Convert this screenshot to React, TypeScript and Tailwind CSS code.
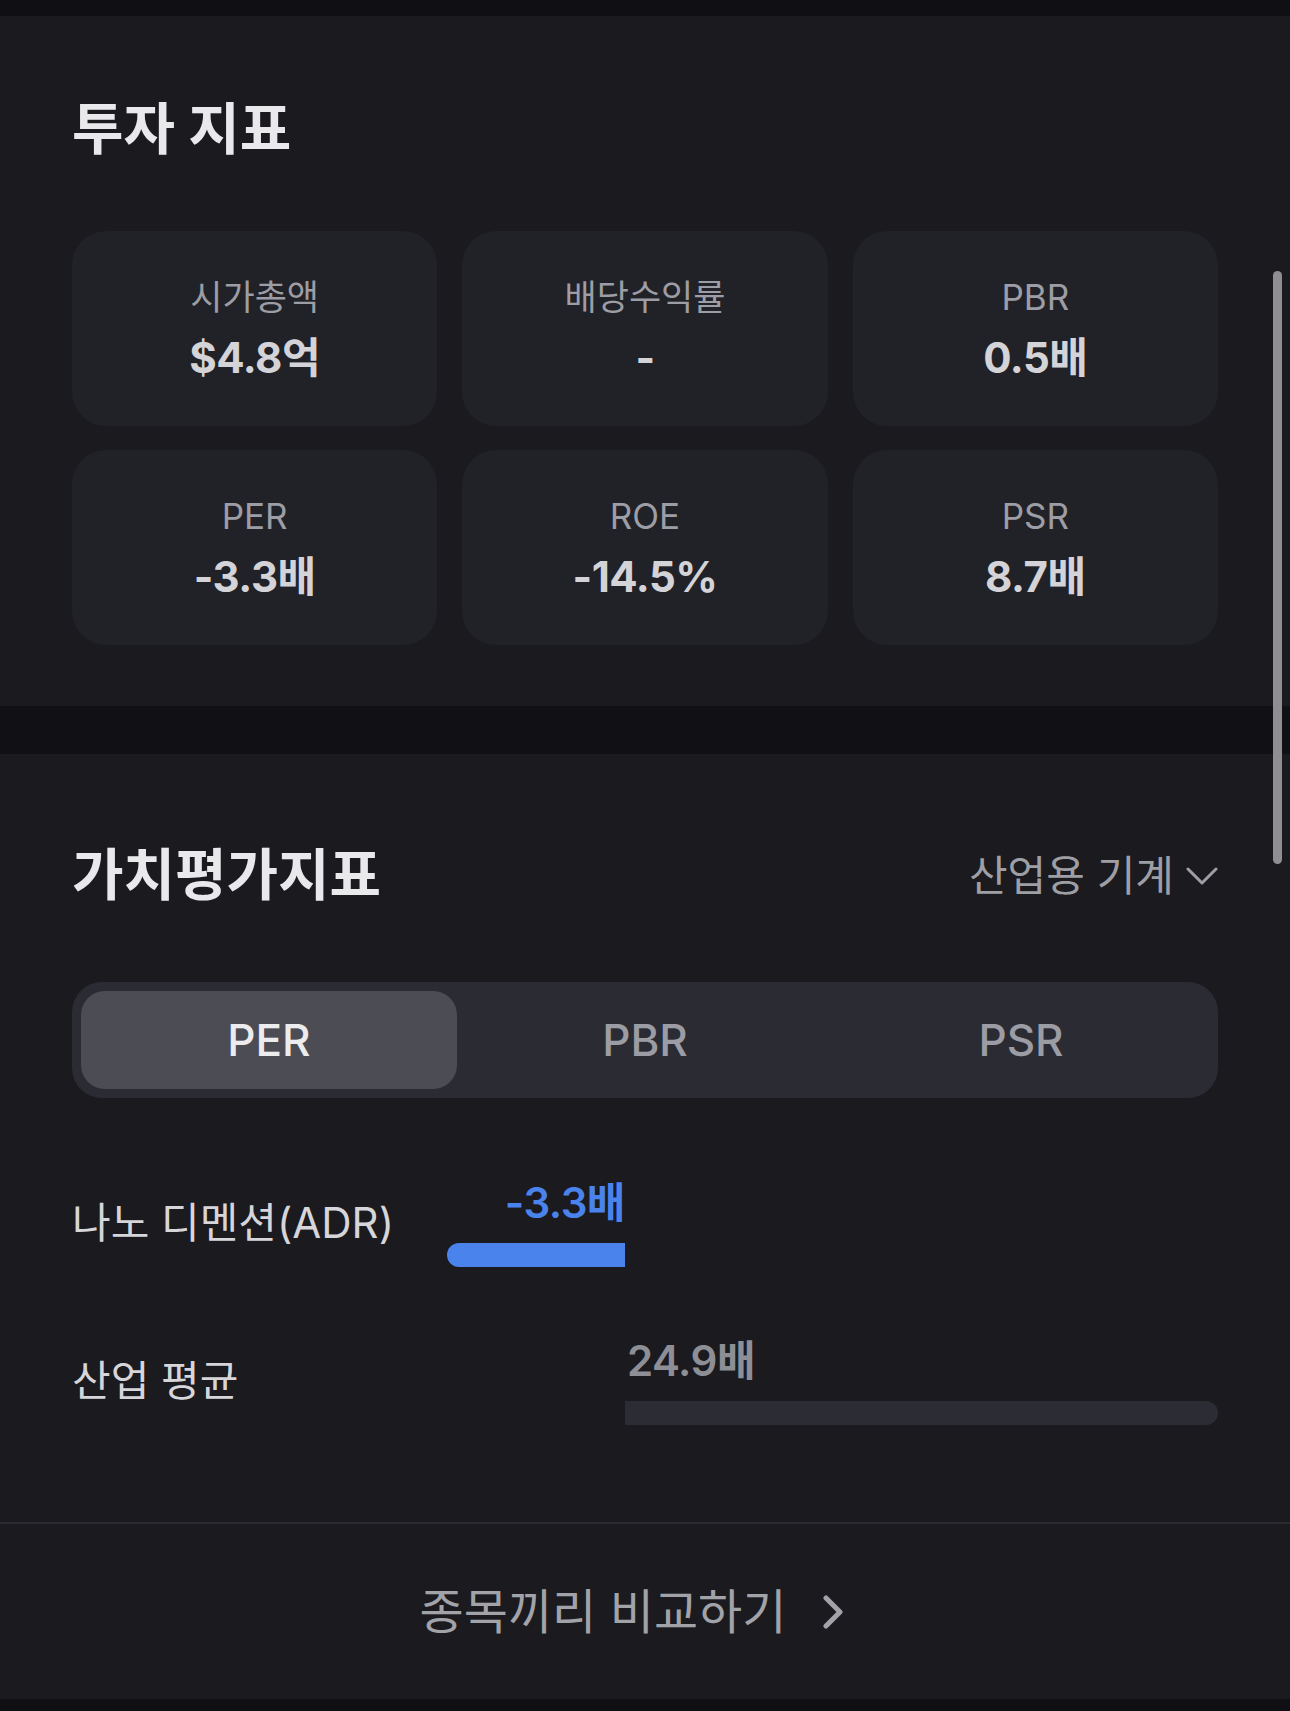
import { FC } from "react";

const FONT = "font-['Inter','Noto_Sans_CJK_KR',sans-serif]";

interface Metric {
  label: string;
  value: string;
}

const metrics: Metric[] = [
  { label: "시가총액", value: "$4.8억" },
  { label: "배당수익률", value: "-" },
  { label: "PBR", value: "0.5배" },
  { label: "PER", value: "-3.3배" },
  { label: "ROE", value: "-14.5%" },
  { label: "PSR", value: "8.7배" },
];

const MetricCard: FC<Metric> = ({ label, value }) => (
  <div className="flex h-[195px] flex-col items-center justify-center rounded-[34px] bg-[#212227]">
    <span className="text-[35px] leading-[44px] text-[#9d9da5]">{label}</span>
    <span className="mt-[14px] text-[42px] font-bold leading-[50px] tracking-[-0.5px] text-[#d3d3d8]">
      {value}
    </span>
  </div>
);

const tabs = ["PER", "PBR", "PSR"];

export default function App() {
  return (
    <div className={`relative flex min-h-[1711px] w-full flex-col bg-[#1a1a1f] ${FONT}`}>
      <div className="h-[16px] bg-[#101014]" />

      {/* 투자 지표 */}
      <section className="px-[72px] pb-[61px] pt-[81px]">
        <h2 className="text-[56px] font-bold leading-[65px] text-[#e9e9ec]">투자 지표</h2>
        <div className="mt-[69px] grid grid-cols-3 gap-x-[25px] gap-y-[24px]">
          {metrics.map((m) => (
            <MetricCard key={m.label} {...m} />
          ))}
        </div>
      </section>

      <div className="h-[48px] bg-[#111115]" />

      {/* 가치평가지표 */}
      <section className="px-[72px] pb-[97px] pt-[89px]">
        <div className="flex items-center justify-between">
          <h2 className="text-[56px] font-bold leading-[65px] text-[#e9e9ec]">가치평가지표</h2>
          <button className="flex items-center gap-[12px] text-[42px] leading-[50px] text-[#9e9ea5]">
            산업용 기계
            <svg width="32" height="18" viewBox="0 0 32 18" fill="none">
              <path
                d="M2 2L16 16L30 2"
                stroke="#9e9ea5"
                strokeWidth="3"
                strokeLinecap="round"
                strokeLinejoin="round"
              />
            </svg>
          </button>
        </div>

        <div className="mt-[74px] flex h-[116px] rounded-[30px] bg-[#2b2b33] p-[9px]">
          {tabs.map((t, i) => (
            <div
              key={t}
              className={
                i === 0
                  ? "flex flex-1 items-center justify-center rounded-[24px] bg-[#4c4c55] text-[44px] font-medium text-[#ececef]"
                  : "flex flex-1 items-center justify-center text-[44px] font-medium text-[#9c9ca4]"
              }
            >
              {t}
            </div>
          ))}
        </div>

        {/* 나노 디멘션 */}
        <div className="mt-[80px] flex items-center">
          <span className="w-[375px] text-[42px] leading-[50px] text-[#d6d6da]">나노 디멘션(ADR)</span>
          <div className="flex flex-1">
            <div className="flex w-[178px] flex-col">
              <span className="text-right text-[42px] font-semibold leading-[50px] tracking-[-0.5px] text-[#4a83ec]">
                -3.3배
              </span>
              <div className="mt-[15px] h-[24px] rounded-l-[12px] bg-[#4a83ec]" />
            </div>
            <div className="flex-1" />
          </div>
        </div>

        {/* 산업 평균 */}
        <div className="mt-[69px] flex items-center">
          <span className="w-[375px] text-[42px] leading-[50px] text-[#d6d6da]">산업 평균</span>
          <div className="flex flex-1">
            <div className="w-[178px]" />
            <div className="flex flex-1 flex-col">
              <span className="pl-[2px] text-[42px] font-semibold leading-[50px] tracking-[-0.5px] text-[#8e8e96]">
                24.9배
              </span>
              <div className="mt-[15px] h-[24px] rounded-r-[12px] bg-[#2c2c35]" />
            </div>
          </div>
        </div>
      </section>

      <div className="h-[2px] bg-[#2a2a30]" />

      <button className="flex h-[175px] items-center justify-center gap-[36px] pr-[26px] text-[48px] leading-[56px] text-[#a2a2a9]">
        종목끼리 비교하기
        <svg width="22" height="34" viewBox="0 0 22 34" fill="none">
          <path
            d="M4 3L18 17L4 31"
            stroke="#a2a2a9"
            strokeWidth="5"
            strokeLinecap="round"
            strokeLinejoin="round"
          />
        </svg>
      </button>

      <div className="flex-1 bg-[#101014]" />

      {/* scrollbar */}
      <div className="absolute left-[1273px] top-[271px] h-[593px] w-[9px] rounded-full bg-[#8e8e93]" />
    </div>
  );
}
